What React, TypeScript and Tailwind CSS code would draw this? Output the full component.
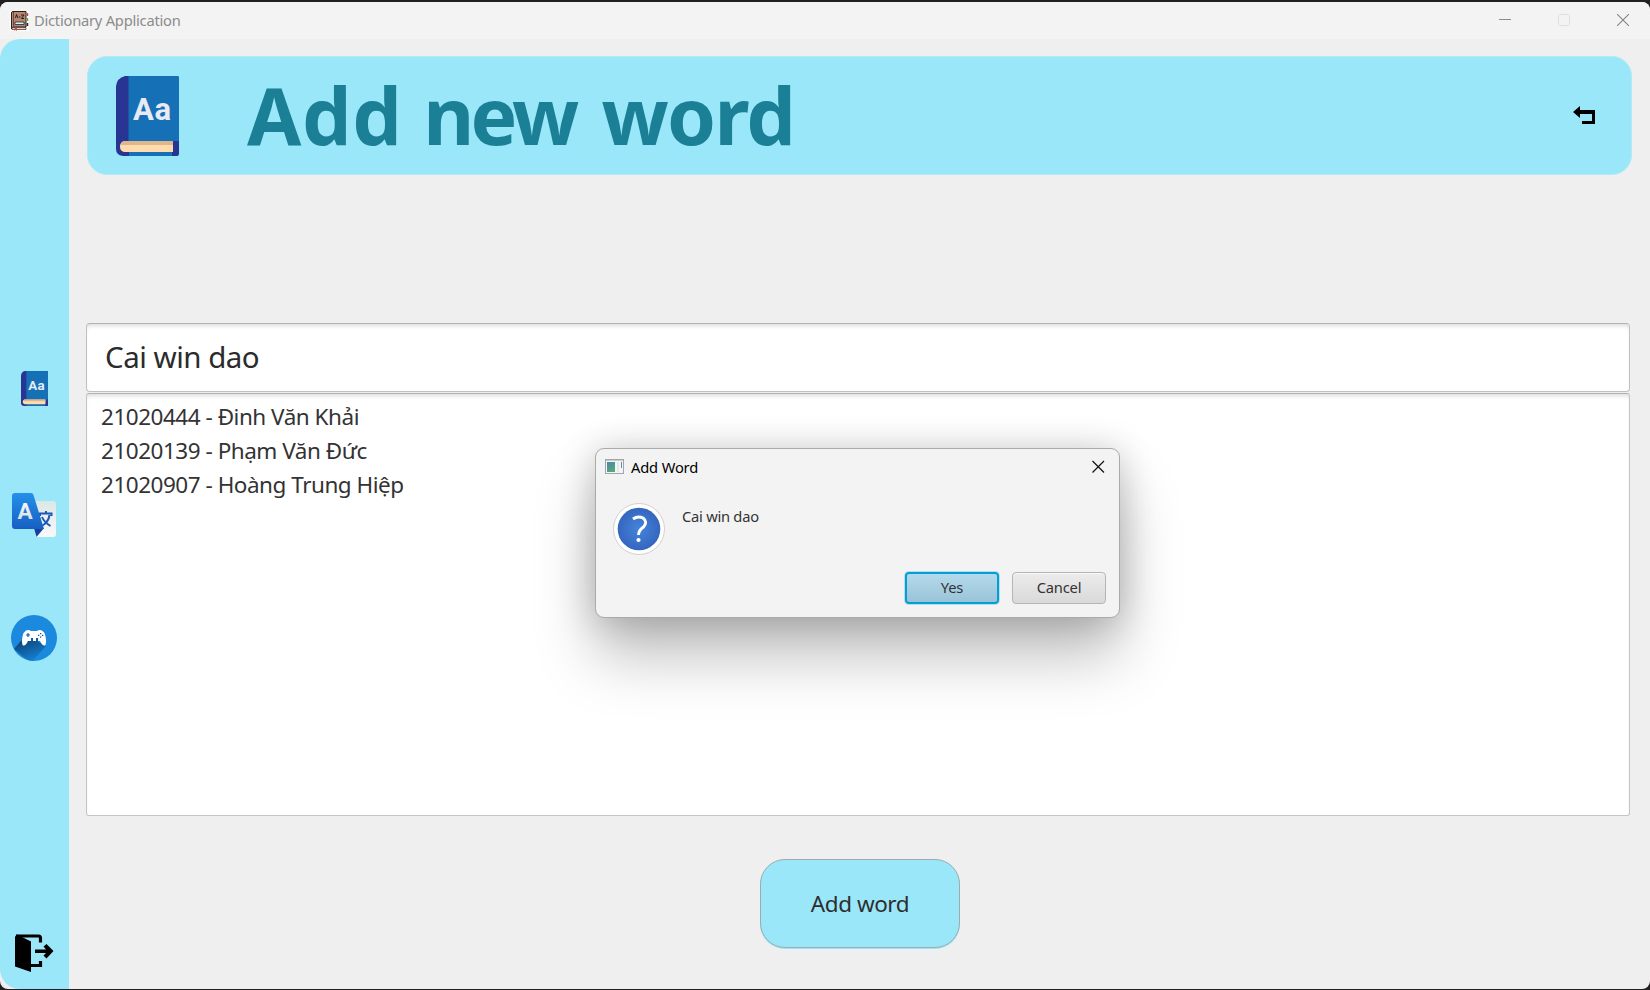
import React from "react";

const students = [
  "21020444 - Đinh Văn Khải",
  "21020139 - Phạm Văn Đức",
  "21020907 - Hoàng Trung Hiệp",
];

function DictionaryBook({ className }: { className: string }) {
  return (
    <svg className={className} viewBox="0 0 63 80" preserveAspectRatio="none">
      <path d="M9 0H61Q63 0 63 2V78Q63 80 61 80H7Q0 79 0 73V10Q1 2 9 0Z" fill="#283593" />
      <path d="M12.500 0H61Q63 0 63 2V65H12.500Z" fill="#1670b5" />
      <path d="M13 76H56V80H13Z" fill="#1670b5" />
      <path d="M8 65H57V76H8Q4 75 4 70.500T8 65Z" fill="#ffdcae" />
      <path d="M8 65H57V69H4.500Q5 66 8 65Z" fill="#e0b68c" />
      <text x="17" y="44" fontSize="31" fontWeight="700" fontFamily="Roboto, sans-serif" fill="#e8eaf6" textLength="38" lengthAdjust="spacing">Aa</text>
    </svg>
  );
}

function AppIcon() {
  return (
    <svg className="h-5 w-[19px]" viewBox="0 0 19 20">
      <rect width="19" height="20" fill="#fff" />
      <path d="M1.500 2Q1.500.5 3 .5H16V16H3L1.500 18Z" fill="#b58670" stroke="#2b2020" />
      <path d="M3.500 1V16" stroke="#6d4a3d" />
      <path d="M5 11h9v2.500H5z" fill="#dcecf8" stroke="#20283a" strokeWidth=".8" />
      <path d="M5.500 7 6.500 3.500 8 7M9 6h1.500M11 4h3l-2.500 3.500H14" fill="none" stroke="#241c1c" />
      <path d="M2 16.500H16V18.500H2Z" fill="#ead9bd" stroke="#3a2b28" strokeWidth=".7" />
      <path d="M4.500 17H7V20L5.500 19L4.500 20Z" fill="#d24a56" />
      <path d="M17.500 2v3" stroke="#c94444" strokeWidth="1.500" />
      <path d="M17.500 7v3" stroke="#69a23c" strokeWidth="1.500" />
      <path d="M17.500 12v3" stroke="#222" strokeWidth="1.500" />
    </svg>
  );
}

function TranslateIcon() {
  return (
    <svg className="h-11 w-11" viewBox="0 0 44 44">
      <defs>
        <linearGradient id="sheet" x2="0" y2="1"><stop stopColor="#dbe7e6" /><stop offset="1" stopColor="#f8faf9" /></linearGradient>
        <linearGradient id="tile" x2="0" y2="1"><stop stopColor="#2590ea" /><stop offset="1" stopColor="#155fc2" /></linearGradient>
        <linearGradient id="letter" x2="0" y2="1"><stop stopColor="#fff" /><stop offset="1" stopColor="#cfd9df" /></linearGradient>
      </defs>
      <path d="M20 8H41Q44 8 44 11V41Q44 44 41 44H24Z" fill="url(#sheet)" />
      <path d="M28 23V20.500H39.500V23M34 18v3M30 24Q32 29 38.500 33M37.500 22Q36.500 29 30.500 32.500" fill="none" stroke="#1d57b8" strokeWidth="2" />
      <path d="M22 35H32L24.500 44Z" fill="#173ea5" />
      <path d="M3 0H19Q21 0 21.500 2L32 36H3Q0 36 0 33V3Q0 0 3 0Z" fill="url(#tile)" />
      <text x="5.500" y="26" fontSize="22.500" fontWeight="700" fontFamily="Roboto, sans-serif" fill="url(#letter)">A</text>
    </svg>
  );
}

function GameIcon() {
  return (
    <svg className="size-[46px]" viewBox="0 0 46 46">
      <defs>
        <linearGradient id="padShade" x1=".3" y1=".2" x2=".65" y2="1"><stop stopColor="#0d477c" /><stop offset="1" stopColor="#1887dc" /></linearGradient>
        <clipPath id="disc"><circle cx="23" cy="23" r="23" /></clipPath>
      </defs>
      <circle cx="23" cy="23" r="23" fill="#1b89de" />
      <path d="M15 20 3 34 20 48 35 31Z" fill="url(#padShade)" clipPath="url(#disc)" />
      <path d="M15 15.500Q18 14.500 20 16H26Q28 14.500 31 15.500L33.500 18Q36 25 34.500 30Q32 32 29 26H17Q14 32 11.500 30Q10 25 12.500 18Z" fill="#fff" />
      <path d="M17 18v4M15 20h4" stroke="#14599a" strokeWidth="1.200" />
      <path d="M20 23h2v3h-2zM25 23h2v3h-2z" fill="#14599a" />
      <path d="M29 18h1.300v1.300H29zM29 21.500h1.300v1.300H29zM27 19.700h1.300V21H27zM31 19.700h1.300V21H31z" fill="#14599a" />
    </svg>
  );
}

function ExitIcon() {
  return (
    <svg className="h-[39px] w-[39px]" viewBox="0 0 39 39">
      <path d="M1 2H23.500Q25.500 2 25.500 4.500V8.500M25.500 27V31.500H16" fill="none" stroke="#000" strokeWidth="3.200" />
      <path d="M0 2.500 2 .5 16 7.500V38L0 32.500Z" />
      <path d="M20 15.500H31L28.500 12.500 31.500 10 38.500 17 31.500 24.500 28.500 21.500 31 19H20Z" />
    </svg>
  );
}

function Dialog() {
  return (
    <section role="dialog" className="absolute left-[595px] top-[448px] flex h-[170px] w-[525px] flex-col rounded-[9px] border border-[#aaa] bg-[#f3f3f3] shadow-[0_38px_60px_rgba(0,0,0,0.25),0_2px_36px_rgba(0,0,0,0.2)]">
      <div className="flex h-[35px] items-center pl-[9px] pr-[14px]">
        <svg className="h-4 w-[19px]" viewBox="0 0 19 16">
          <defs><linearGradient id="pane" x2=".5" y2="1"><stop stopColor="#4b83b1" /><stop offset="1" stopColor="#55a878" /></linearGradient></defs>
          <rect x=".5" y=".5" width="18" height="14" fill="#f4f6f6" stroke="#a0a6a9" />
          <path d="M1 1.500h17" stroke="#c6ccd0" />
          <rect x="2" y="3" width="8" height="10" fill="url(#pane)" />
          <path d="M12 3h2v10h-2z" fill="#e5e8e8" />
          <path d="M16.500 3v6" stroke="#5794a0" />
        </svg>
        <span className="ml-[7px] text-[14.700px] leading-5 tracking-[-0.150px] text-black">Add Word</span>
        <svg className="ml-auto size-[13px]" viewBox="0 0 13 13"><path d="m.5 1 11.500 11.500m0-11.500-11.500 11.500" stroke="#111" strokeWidth="1.200" /></svg>
      </div>
      <div className="flex flex-1 pl-4 pt-[18px]">
        <svg className="size-[54px]" viewBox="0 0 54 54">
          <defs><radialGradient id="help"><stop stopColor="#4585d9" /><stop offset="1" stopColor="#3566bf" /></radialGradient></defs>
          <circle cx="27" cy="27" r="25.500" fill="#fff" stroke="#d2d2d2" />
          <circle cx="27" cy="27" r="21.300" fill="url(#help)" />
          <path d="M21 17Q26 13.500 31 16Q36 20 31.500 25Q26.500 28.500 26.500 33" fill="none" stroke="#fff" strokeWidth="2.900" />
          <circle cx="26.500" cy="38" r="2.100" fill="#fff" />
        </svg>
        <span className="ml-4 mt-1 text-[14.700px] leading-5 tracking-[-0.250px] text-[#333]">Cai win dao</span>
      </div>
      <div className="flex h-[45px] items-start justify-end gap-[13px] pr-[13px]">
        <button className="h-8 w-[94px] rounded-[4px] border-2 border-[#039ed3] bg-linear-to-b from-[#b3daec] to-[#9bc3d7] pb-[2px] text-[14.700px] tracking-[-0.200px] text-[#333] shadow-[0_0_0_1px_rgba(3,158,211,0.25)]">Yes</button>
        <button className="h-8 w-[94px] rounded-[4px] border border-[#b5b5b5] bg-linear-to-b from-[#ececec] to-[#d9d9d9] pb-[2px] text-[14.700px] tracking-[-0.200px] text-[#333] shadow-[inset_0_1px_0_#f8f8f8]">Cancel</button>
      </div>
    </section>
  );
}

export default function App() {
  return (
    <div className="relative h-[990px] w-[1650px] overflow-hidden bg-[#222021] pb-px pt-[2px] font-['Noto_Sans',sans-serif]">
      <div className="flex h-full flex-col overflow-hidden rounded-[8px] bg-[#efefef]">
        <header className="flex h-[37px] shrink-0 items-center bg-[#f3f3f3] pl-[10px] pr-[21px]">
          <AppIcon />
          <span className="mb-[2px] ml-[5px] text-[14.700px] leading-5 tracking-[-0.230px] text-[#8b8b8b]">Dictionary Application</span>
          <div className="mb-[2px] ml-auto flex items-center gap-[47px]">
            <svg className="h-3 w-3" viewBox="0 0 12 12"><path d="M0 5.500h12" stroke="#8c8c8c" /></svg>
            <svg className="h-3 w-3" viewBox="0 0 12 12"><rect x=".5" y=".5" width="11" height="11" rx="1" fill="none" stroke="#dedede" /></svg>
            <svg className="size-3" viewBox="0 0 12 12"><path d="m0 0 12 12M12 0 0 12" stroke="#858585" strokeWidth="1.100" /></svg>
          </div>
        </header>
        <div className="flex min-h-0 flex-1">
          <nav className="flex w-[69px] shrink-0 flex-col items-center rounded-l-[20px] bg-[#99e7f9]">
            <DictionaryBook className="mt-[332px] h-[35px] w-[27px]" />
            <div className="mt-[87px] pr-[2px]"><TranslateIcon /></div>
            <div className="mt-[78px] pr-px"><GameIcon /></div>
            <div className="mt-[273px]"><ExitIcon /></div>
          </nav>
          <main className="flex flex-1 flex-col pl-[17px] pt-[17px]">
            <div className="ml-px flex h-[119px] w-[1545px] shrink-0 items-center rounded-[20px] border border-[#b4e9f5] bg-[#99e7f9] pl-7 pr-[36px]">
              <DictionaryBook className="mt-px h-20 w-[63px]" />
              <h1 className="mb-[2px] ml-[68px] flex text-[78.500px] font-bold leading-[100px] text-[#1b7f95]">
                <span className="mr-[20.500px] tracking-[0.700px]">Add</span>
                <span className="mr-[26px] tracking-[-3.700px]">new</span>
                <span className="tracking-[-1.700px]">word</span>
              </h1>
              <svg className="mb-[2px] ml-auto h-[18px] w-[22px]" viewBox="0 0 22 18"><path d="M0 6 7 0V4H22V18H9V15H19V8H7V12Z" /></svg>
            </div>
            <div className="mt-[148px] flex h-[69px] w-[1544px] shrink-0 items-center rounded-[4px] border border-[#c0c0c0] border-t-[#b2b2b2] bg-white pl-[18px] text-[29.500px] tracking-[-0.500px] text-[#2b2b2b] shadow-[inset_0_4px_4px_-2px_#ddd]">Cai win dao</div>
            <div className="mt-px flex h-[423px] w-[1544px] shrink-0 flex-col rounded-[3px] border border-[#c4c4c4] border-t-[#b2b2b2] bg-white pl-[14px] pt-[6px] text-[22.500px] leading-[34px] tracking-[-0.480px] text-[#333] shadow-[inset_0_4px_4px_-2px_#ddd]">
              {students.map((student) => <span key={student} className="self-start">{student}</span>)}
            </div>
            <button className="ml-[674px] mt-[43px] h-[89px] w-[200px] shrink-0 rounded-[25px] border border-[#9fabad] bg-[#99e7f9] text-[22.500px] tracking-[-0.450px] text-[#2e2e2e] shadow-[0_1px_0_#99e7f9]">Add word</button>
          </main>
        </div>
      </div>
      <Dialog />
    </div>
  );
}
